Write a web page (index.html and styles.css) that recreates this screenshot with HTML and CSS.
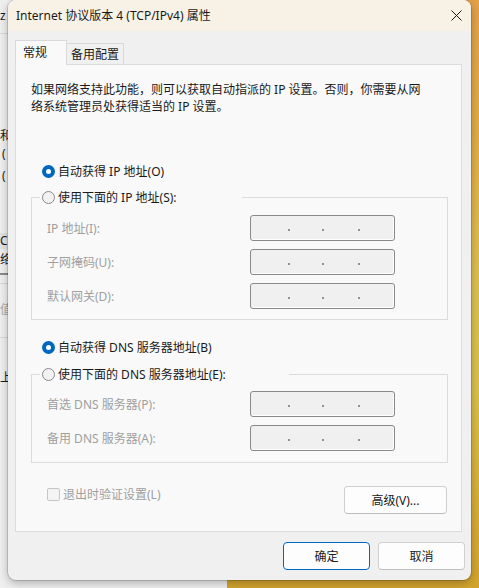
FILE: index.html
```html
<!DOCTYPE html>
<html lang="zh-CN">
<head>
<meta charset="utf-8">
<title>Internet 协议版本 4 (TCP/IPv4) 属性</title>
<link rel="stylesheet" href="styles.css">
</head>
<body>
<div class="backwin">
  <div class="bw r-z">z</div>
  <div class="bw-line l-1"></div>
  <div class="bw r-he">和</div>
  <div class="bw r-p1">(</div>
  <div class="bw r-p2">(</div>
  <div class="bw r-tc">C</div>
  <div class="bw r-luo">络</div>
  <div class="bw-line l-2"></div>
  <div class="bw-line l-3"></div>
  <div class="bw r-zhi">值</div>
  <div class="bw-line l-4"></div>
  <div class="bw r-shang">上</div>
</div>

<div class="window">
  <div class="titlebar">
    <span class="title">Internet 协议版本 4 (TCP/IPv4) 属性</span>
    <svg class="close" viewBox="0 0 11 11" width="11" height="11"><path d="M0.5 0.5L10.5 10.5M10.5 0.5L0.5 10.5" stroke="#1a1a1a" stroke-width="1" fill="none"/></svg>
  </div>

  <div class="tabs">
    <div class="tab active">常规</div>
    <div class="tab">备用配置</div>
  </div>

  <div class="panel">
    <p class="intro">如果网络支持此功能，则可以获取自动指派的 IP 设置。否则，你需要从网<br>络系统管理员处获得适当的 IP 设置。</p>

    <div class="opt auto ip-auto"><span class="radio on"></span><span>自动获得 IP 地址(O)</span></div>
    <fieldset class="group">
      <legend class="legend-ip"><span class="opt"><span class="radio"></span><span>使用下面的 IP 地址(S):</span></span></legend>
      <div class="fields">
        <div class="field"><span class="flabel">IP 地址(I):</span><div class="ipbox"><i></i><i></i><i></i></div></div>
        <div class="field"><span class="flabel">子网掩码(U):</span><div class="ipbox"><i></i><i></i><i></i></div></div>
        <div class="field"><span class="flabel">默认网关(D):</span><div class="ipbox"><i></i><i></i><i></i></div></div>
      </div>
    </fieldset>

    <div class="opt auto dns-auto"><span class="radio on"></span><span>自动获得 DNS 服务器地址(B)</span></div>
    <fieldset class="group dns">
      <legend class="legend-dns"><span class="opt"><span class="radio"></span><span>使用下面的 DNS 服务器地址(E):</span></span></legend>
      <div class="fields">
        <div class="field"><span class="flabel">首选 DNS 服务器(P):</span><div class="ipbox"><i></i><i></i><i></i></div></div>
        <div class="field"><span class="flabel">备用 DNS 服务器(A):</span><div class="ipbox"><i></i><i></i><i></i></div></div>
      </div>
    </fieldset>

    <div class="bottom">
      <label class="check"><span class="cbox"></span><span>退出时验证设置(L)</span></label>
      <button class="btn adv" type="button">高级(V)...</button>
    </div>
  </div>

  <div class="actions">
    <button class="btn primary" type="button">确定</button>
    <button class="btn" type="button">取消</button>
  </div>
</div>
</body>
</html>
```
FILE: styles.css
```css
* { box-sizing: border-box; }
html, body { margin: 0; }
body {
  width: 479px;
  height: 588px;
  overflow: hidden;
  position: relative;
  font-family: "Noto Sans", "Noto Sans CJK SC", sans-serif;
  font-size: 12px;
  line-height: 17px;
  color: #1a1a1a;
  background: linear-gradient(180deg, #e3a14a 0%, #e2ac46 22%, #dcc052 48%, #d9c04c 66%, #d6ad36 86%, #d3a42e 100%);
}

/* window behind the dialog */
.backwin {
  position: absolute;
  left: 0;
  top: 0;
  width: 227px;
  height: 588px;
  background: #efefef;
  display: flex;
  flex-direction: column;
  overflow: hidden;
  z-index: 0;
}
.bw { height: 15px; line-height: 15px; white-space: nowrap; color: #1a1a1a; }
.bw-line { height: 1px; background: #d8d8d8; }
.r-z { margin-top: 8px; }
.l-1 { margin-top: 10px; }
.r-he { margin-top: 94px; }
.r-p1 { margin-top: 3px; margin-left: 2px; }
.r-p2 { margin-top: 7px; margin-left: 2px; }
.r-tc { margin-top: 50px; height: 16px; background: #e3e3e3; }
.r-luo { margin-top: 3px; }
.l-2 { margin-top: 6px; height: 2px; background: #8a8a8a; }
.l-3 { margin-top: 8px; }
.r-zhi { margin-top: 18px; color: #a8a8a8; }
.l-4 { margin-top: 20px; }
.r-shang { margin-top: 32px; }

/* dialog */
.window {
  position: relative;
  z-index: 1;
  margin-left: 8px;
  width: 463px;
  height: 580px;
  background: #f0f0f0;
  border-radius: 8px;
  overflow: hidden;
  display: flex;
  flex-direction: column;
  box-shadow: 0 0 0 1px rgba(0, 0, 0, 0.14), 0 3px 10px rgba(0, 0, 0, 0.28);
}
.titlebar {
  flex: none;
  height: 31px;
  background: #f8f2e6;
  display: flex;
  align-items: center;
  justify-content: space-between;
  padding: 0 9px 0 8px;
}
.title { white-space: nowrap; }
.close { display: block; }

.tabs {
  flex: none;
  position: relative;
  z-index: 2;
  height: 25px;
  margin: 9px 0 0 7px;
  display: flex;
  align-items: flex-end;
}
.tab {
  width: 58px;
  height: 21px;
  margin: 0 0 1px -1px;
  border: 1px solid #d9d9d9;
  border-bottom: none;
  background: #f0f0f0;
  display: flex;
  align-items: center;
  justify-content: center;
  white-space: nowrap;
}
.tab.active {
  width: 52px;
  height: 25px;
  margin: 0;
  background: #f9f9f9;
  justify-content: flex-start;
  padding-left: 7px;
  padding-bottom: 1px;
}

.panel {
  flex: none;
  margin: -1px 0 0 7px;
  width: 447px;
  height: 468px;
  background: #f9f9f9;
  border: 1px solid #dcdcdc;
}
.intro {
  margin: 16px 0 0 15px;
  white-space: nowrap;
}

.opt {
  display: flex;
  align-items: center;
  gap: 3px;
  height: 20px;
  white-space: nowrap;
}
.opt.auto { margin-left: 26px; }
.opt.ip-auto { margin-top: 46px; }
.opt.dns-auto { margin-top: 17px; }

.radio {
  flex: none;
  width: 13px;
  height: 13px;
  border-radius: 50%;
  border: 1px solid #8a8a8a;
  background: #f2f2f2;
}
.radio.on {
  border: none;
  background: #0067c0;
  display: flex;
  align-items: center;
  justify-content: center;
}
.radio.on::after {
  content: "";
  width: 5px;
  height: 5px;
  border-radius: 50%;
  background: #ffffff;
}

.group {
  margin: 6px 0 0 15px;
  padding: 0;
  width: 417px;
  min-width: 0;
  border: 1px solid #dcdcdc;
}
.group.dns { margin-top: 7px; }
.group legend {
  margin-left: 8px;
  padding: 0 0 0 2px;
  height: 20px;
}
.legend-ip { width: 202px; }
.legend-dns { width: 249px; }

.fields {
  display: flex;
  flex-direction: column;
  gap: 8px;
  padding: 8px 0 10px 15px;
}
.dns .fields { padding: 7px 0 11px 15px; }
.field {
  display: flex;
  align-items: center;
  height: 26px;
}
.flabel {
  width: 203px;
  color: #a0a0a0;
  white-space: nowrap;
}
.ipbox {
  width: 145px;
  height: 26px;
  border: 1px solid #8a8a8a;
  border-radius: 3px;
  background: #f0f0f0;
  box-shadow: inset -1px -1px 0 #ffffff;
  display: flex;
  align-items: flex-end;
  padding: 0 0 9px 37px;
}
.ipbox i {
  display: block;
  width: 2px;
  height: 2px;
  background: #8a949e;
}
.ipbox i + i { margin-left: 32px; }
.ipbox i + i + i { margin-left: 34px; }

.bottom {
  display: flex;
  justify-content: space-between;
  align-items: flex-start;
  margin-top: 23px;
}
.check {
  display: flex;
  align-items: center;
  gap: 3px;
  height: 17px;
  margin-left: 31px;
  color: #a0a0a0;
  white-space: nowrap;
}
.cbox {
  width: 13px;
  height: 13px;
  border: 1px solid #c6c6c6;
  border-radius: 2px;
  background: #f4f4f4;
}

.btn {
  font: inherit;
  color: #1a1a1a;
  height: 28px;
  padding: 0;
  border: 1px solid #d0d0d0;
  border-bottom-color: #bdbdbd;
  border-radius: 4px;
  background: #fdfdfd;
  display: flex;
  align-items: center;
  justify-content: center;
  white-space: nowrap;
}
.btn.adv { width: 103px; margin-right: 14px; }
.actions {
  flex: none;
  display: flex;
  justify-content: flex-end;
  gap: 8px;
  padding: 10px 6px 0 0;
}
.actions .btn { width: 87px; }
.btn.primary { border-color: #0067c0; }
```
